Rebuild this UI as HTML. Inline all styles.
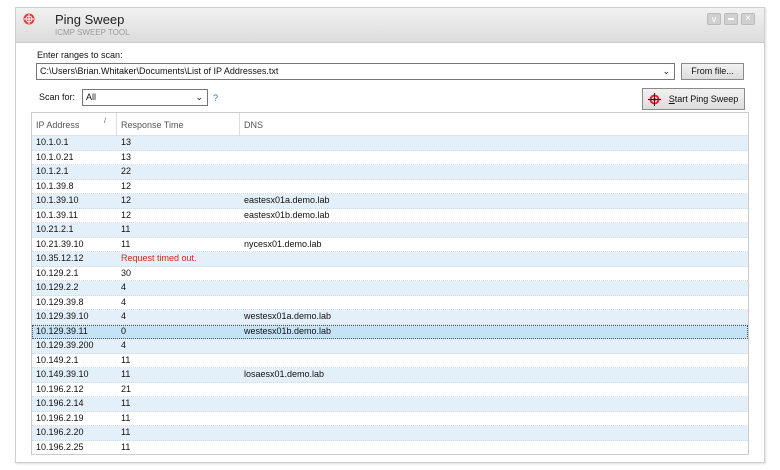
<!DOCTYPE html>
<html><head><meta charset="utf-8"><style>
*{margin:0;padding:0;box-sizing:border-box}
body{width:780px;height:470px;background:#fff;font-family:"Liberation Sans",Arial,sans-serif;font-size:9px;color:#111;position:relative;overflow:hidden}
.win{position:absolute;left:15px;top:7px;width:750px;height:456px;border:1px solid #cfcfcf;background:#fff;box-shadow:1px 1px 2px #ddd}
.title{position:absolute;left:0;top:0;width:748px;height:35px;background:linear-gradient(#f1f1f1,#dcdcdc);border-bottom:1px solid #ccc}
.abs{position:absolute}
.btn{position:absolute;background:linear-gradient(#f2f2f2,#dcdcdc);border:1px solid #8a8a8a;font-size:9px;text-align:center}
.list{position:absolute;left:31px;top:112px;width:718px;height:343px;border:1px solid #ccc;overflow:hidden}
.hdr{height:23px;border-bottom:1px solid #e3e3e3;position:relative;color:#555;font-size:9px}
.row{height:14.5px;position:relative;border-bottom:1px dotted #d2dbe4;line-height:13.5px}
.row span,.hdr span{position:absolute}
.b{background:#e3eff9}
.sel{background:#c4e3f7;outline:1px dotted #555;outline-offset:-1px}
</style></head><body>
<div class="win">
 <div class="title">
  <svg class="abs" style="left:7px;top:5px" width="12" height="12" viewBox="0 0 12 12"><circle cx="6" cy="6" r="5.5" fill="#e33"/><circle cx="6" cy="6" r="3" fill="none" stroke="#fff" stroke-width="1"/><path d="M6 1v10M1 6h10" stroke="#fff" stroke-width="1"/></svg>
  <div class="abs" style="left:39px;top:4px;font-size:13px;color:#222">Ping Sweep</div>
  <div class="abs" style="left:39px;top:20px;font-size:8px;color:#999">ICMP SWEEP TOOL</div>
  <div class="abs" style="left:691px;top:5px;width:14px;height:12px;background:#d0d0d0;border:1px solid #bbb;border-radius:2px;color:#fff;font-size:9px;text-align:center;line-height:10px">v</div>
  <div class="abs" style="left:708px;top:5px;width:14px;height:12px;background:#d0d0d0;border:1px solid #bbb;border-radius:2px"><div style="margin:4px 3px;height:2px;background:#fff"></div></div>
  <div class="abs" style="left:725px;top:5px;width:14px;height:12px;background:#d0d0d0;border:1px solid #bbb;border-radius:2px;color:#fff;font-size:10px;text-align:center;line-height:10px">×</div>
 </div>
 <div class="abs" style="left:21px;top:42px;font-size:9px">Enter ranges to scan:</div>
 <div class="abs" style="left:20px;top:55px;width:639px;height:17px;border:1px solid #777;padding:2px 3px;font-size:9px">C:\Users\Brian.Whitaker\Documents\List of IP Addresses.txt<span style="position:absolute;right:4px;top:2px">&#8964;</span></div>
 <div class="btn" style="left:665px;top:55px;width:63px;height:17px;line-height:15px">From file...</div>
 <div class="abs" style="left:23px;top:84px">Scan for:</div>
 <div class="abs" style="left:66px;top:81px;width:126px;height:17px;border:1px solid #777;padding:2px 3px">All<span style="position:absolute;right:4px;top:2px">&#8964;</span></div>
 <div class="abs" style="left:197px;top:85px;color:#3a6fb0">?</div>
 <div class="btn" style="left:626px;top:80px;width:103px;height:22px;line-height:20px;padding-left:20px">
  <svg style="position:absolute;left:5px;top:4px" width="13" height="13" viewBox="0 0 13 13"><circle cx="6.5" cy="6.5" r="4" fill="none" stroke="#e22" stroke-width="2"/><circle cx="6.5" cy="6.5" r="1.5" fill="#e22"/><path d="M6.5 0v13M0 6.5h13" stroke="#222" stroke-width="1"/></svg>
  <u>S</u>tart Ping Sweep</div>
</div>
<div class="list">
 <div class="hdr"><span style="left:4px;top:7px">IP Address</span><span style="left:72px;top:5px;font-size:7px">/</span><span style="left:84px;top:0;height:23px;border-left:1px solid #ddd"></span><span style="left:89px;top:7px">Response Time</span><span style="left:207px;top:0;height:23px;border-left:1px solid #ddd"></span><span style="left:212px;top:7px">DNS</span></div>
 <div class="row b"><span style="left:4px">10.1.0.1</span><span style="left:89px">13</span></div>
 <div class="row"><span style="left:4px">10.1.0.21</span><span style="left:89px">13</span></div>
 <div class="row b"><span style="left:4px">10.1.2.1</span><span style="left:89px">22</span></div>
 <div class="row"><span style="left:4px">10.1.39.8</span><span style="left:89px">12</span></div>
 <div class="row b"><span style="left:4px">10.1.39.10</span><span style="left:89px">12</span><span style="left:212px">eastesx01a.demo.lab</span></div>
 <div class="row"><span style="left:4px">10.1.39.11</span><span style="left:89px">12</span><span style="left:212px">eastesx01b.demo.lab</span></div>
 <div class="row b"><span style="left:4px">10.21.2.1</span><span style="left:89px">11</span></div>
 <div class="row"><span style="left:4px">10.21.39.10</span><span style="left:89px">11</span><span style="left:212px">nycesx01.demo.lab</span></div>
 <div class="row b"><span style="left:4px">10.35.12.12</span><span style="left:89px;color:#e02020">Request timed out.</span></div>
 <div class="row"><span style="left:4px">10.129.2.1</span><span style="left:89px">30</span></div>
 <div class="row b"><span style="left:4px">10.129.2.2</span><span style="left:89px">4</span></div>
 <div class="row"><span style="left:4px">10.129.39.8</span><span style="left:89px">4</span></div>
 <div class="row b"><span style="left:4px">10.129.39.10</span><span style="left:89px">4</span><span style="left:212px">westesx01a.demo.lab</span></div>
 <div class="row sel"><span style="left:4px">10.129.39.11</span><span style="left:89px">0</span><span style="left:212px">westesx01b.demo.lab</span></div>
 <div class="row b"><span style="left:4px">10.129.39.200</span><span style="left:89px">4</span></div>
 <div class="row"><span style="left:4px">10.149.2.1</span><span style="left:89px">11</span></div>
 <div class="row b"><span style="left:4px">10.149.39.10</span><span style="left:89px">11</span><span style="left:212px">losaesx01.demo.lab</span></div>
 <div class="row"><span style="left:4px">10.196.2.12</span><span style="left:89px">21</span></div>
 <div class="row b"><span style="left:4px">10.196.2.14</span><span style="left:89px">11</span></div>
 <div class="row"><span style="left:4px">10.196.2.19</span><span style="left:89px">11</span></div>
 <div class="row b"><span style="left:4px">10.196.2.20</span><span style="left:89px">11</span></div>
 <div class="row"><span style="left:4px">10.196.2.25</span><span style="left:89px">11</span></div>
</div>
</body></html>
